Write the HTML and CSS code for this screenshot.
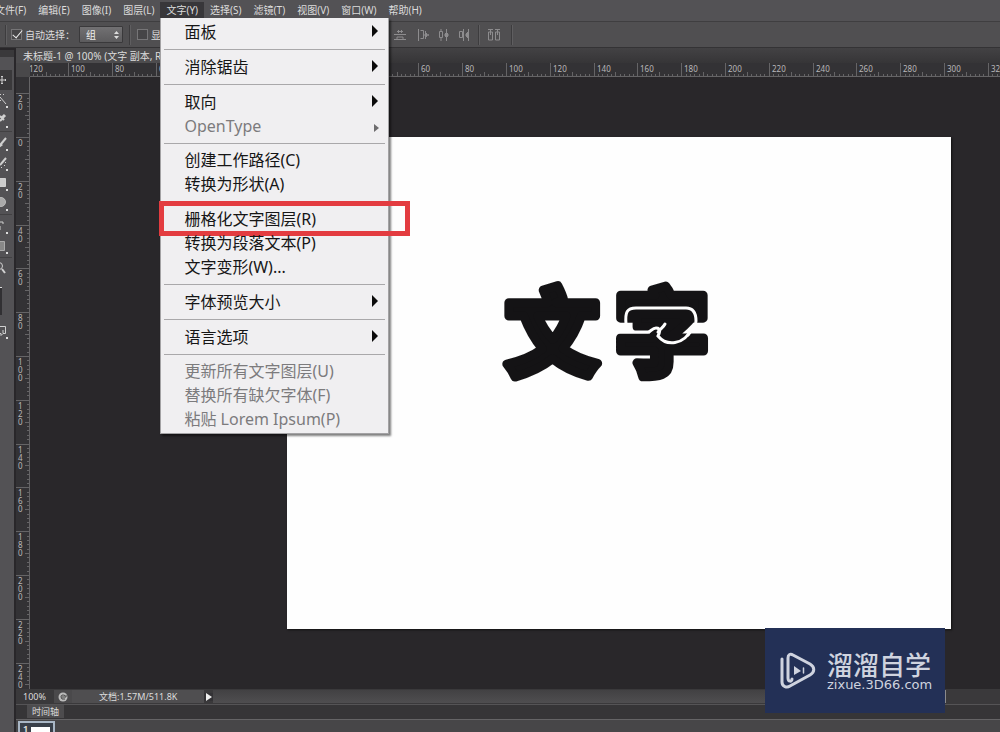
FILE: index.html
```html
<!DOCTYPE html>
<html lang="zh-CN">
<head>
<meta charset="utf-8">
<title>未标题-1 @ 100%</title>
<link rel="stylesheet" href="styles.css">
</head>
<body>
<div class="app">
  <nav class="menubar">
    <button class="menubar-item">文件(F)</button>
    <button class="menubar-item">编辑(E)</button>
    <button class="menubar-item">图像(I)</button>
    <button class="menubar-item">图层(L)</button>
    <div class="menubar-open">
      <button class="menubar-item is-open">文字(Y)</button>
      <div class="menu">
        <button class="menu-item has-sub">面板</button>
        <hr class="menu-sep">
        <button class="menu-item has-sub">消除锯齿</button>
        <hr class="menu-sep">
        <button class="menu-item has-sub">取向</button>
        <button class="menu-item has-sub" disabled>OpenType</button>
        <hr class="menu-sep is-tight">
        <button class="menu-item">创建工作路径(C)</button>
        <button class="menu-item">转换为形状(A)</button>
        <hr class="menu-sep">
        <button class="menu-item is-marked">栅格化文字图层(R)</button>
        <button class="menu-item">转换为段落文本(P)</button>
        <button class="menu-item">文字变形(W)...</button>
        <hr class="menu-sep">
        <button class="menu-item has-sub">字体预览大小</button>
        <hr class="menu-sep">
        <button class="menu-item has-sub">语言选项</button>
        <hr class="menu-sep is-tight">
        <button class="menu-item" disabled>更新所有文字图层(U)</button>
        <button class="menu-item" disabled>替换所有缺欠字体(F)</button>
        <button class="menu-item" disabled>粘贴 Lorem Ipsum(P)</button>
      </div>
    </div>
    <button class="menubar-item">选择(S)</button>
    <button class="menubar-item">滤镜(T)</button>
    <button class="menubar-item">视图(V)</button>
    <button class="menubar-item">窗口(W)</button>
    <button class="menubar-item">帮助(H)</button>
  </nav>

  <div class="options">
    <div class="options-main">
      <span class="divider"></span>
      <label class="check"><input type="checkbox" checked>自动选择：</label>
      <span class="select-wrap">
        <select class="select" aria-label="自动选择"><option>组</option><option>图层</option></select>
        <svg class="select-arrows" width="5" height="8" viewBox="0 0 5 8"><path d="M0 3 2.500 0 5 3ZM0 5h5L2.500 8Z" fill="#ddd"/></svg>
      </span>
      <span class="divider is-wide"></span>
      <label class="check"><input type="checkbox">显示变换控件</label>
    </div>
    <div class="align">
      <button class="align-btn is-first" aria-label="底对齐"><svg width="12" height="12" viewBox="0 0 12 12"><path d="M3 2.500h6M0 5.500h12M0 10.500h12" /><path d="M4.500 1v3M7.500 1v3M3 10V8h6v2" /></svg></button>
      <button class="align-btn" aria-label="左对齐"><svg width="12" height="12" viewBox="0 0 12 12"><path d="M.5 0v12M2.500 1.500h3v8h-3"/><path d="M7.500 2v8M8.500 4v4M10 5v2M6 6h5" /></svg></button>
      <button class="align-btn" aria-label="水平居中"><svg width="12" height="12" viewBox="0 0 12 12"><path d="M1.500 2.500h3v6h-3zM3 0v2M3 9v3M8.500 0v12M7.500 4v4M9.500 4v4M6 6h5"/></svg></button>
      <button class="align-btn" aria-label="右对齐"><svg width="12" height="12" viewBox="0 0 12 12"><path d="M1.500 2.500h3v6h-3zM5.500 0v12M10.500 0v12M9.500 3v6M8.500 4v4M7 6h4"/></svg></button>
      <span class="divider"></span>
      <button class="align-btn" aria-label="分布"><svg width="13" height="12" viewBox="0 0 13 12"><path d="M0 .5h5M7 .5h5M.5 3v8h4V3zM7.500 3v8h4V3zM2.500 1v5M9.500 1v5"/></svg></button>
      <span class="divider is-wide"></span>
    </div>
  </div>

  <div class="workspace">
    <aside class="tools">
      <button class="tool is-active" aria-label="移动"><svg width="12" height="18" viewBox="0 0 12 18"><path d="M-2 9h8M2 5v8M1 6l1-1 1 1M1 12l1 1 1-1M5 8l1 1-1 1"/></svg></button>
      <button class="tool corner" aria-label="魔棒"><svg width="12" height="18" viewBox="0 0 12 18"><path d="M0 6l6 7M0 3l1 1M3 4l1-1M-1 8l2 2"/></svg></button>
      <button class="tool corner" aria-label="吸管"><svg width="12" height="18" viewBox="0 0 12 18"><path d="M0 10l3-3M0 5l4 4" stroke-width="2"/><path d="M2 7l3-3" stroke-width="3"/></svg></button>
      <hr class="tool-sep">
      <button class="tool corner" aria-label="画笔"><svg width="12" height="18" viewBox="0 0 12 18"><path d="M6 4L1 10" stroke-width="2"/><path d="M-1 12l3-2" stroke-width="3"/></svg></button>
      <button class="tool corner" aria-label="历史画笔"><svg width="12" height="18" viewBox="0 0 12 18"><path d="M6 4L0 11" stroke-width="2"/><path d="M4 11l1 1M1 13l1 1M5 8l1 1"/></svg></button>
      <button class="tool corner" aria-label="渐变"><svg width="12" height="18" viewBox="0 0 12 18"><path d="M0 4.500h5.500v8H0" fill="#ccc"/></svg></button>
      <button class="tool corner" aria-label="模糊"><svg width="12" height="18" viewBox="0 0 12 18"><circle cx="1" cy="8" r="4.500" fill="#aaa" stroke="#bbb"/></svg></button>
      <hr class="tool-sep">
      <button class="tool corner" aria-label="钢笔"><svg width="12" height="18" viewBox="0 0 12 18"><path d="M-1 5h4v2M0 9v4"/></svg></button>
      <button class="tool corner" aria-label="矩形"><svg width="12" height="18" viewBox="0 0 12 18"><path d="M-2 4.500h6.500v9H-2" fill="#888" stroke="#aaa"/></svg></button>
      <hr class="tool-sep">
      <button class="tool" aria-label="缩放"><svg width="12" height="18" viewBox="0 0 12 18"><circle cx="-1" cy="6" r="3.500"/><path d="M2 9l3 4" stroke-width="2"/></svg></button>
      <span class="swatch"></span>
      <button class="tool corner" aria-label="快速蒙版"><svg width="12" height="18" viewBox="0 0 12 18"><path d="M-1 4.500h6.500v7H3l-2 2v-2h-2M3 11V8"/></svg></button>
    </aside>

    <main class="document">
      <div class="tabs"><button class="tab">未标题-1 @ 100% (文字 副本, RGB/8)</button></div>
      <div class="view">
        <div class="ruler-corner"></div>
        <svg class="ruler-x" id="ruler-x"></svg>
        <svg class="ruler-y" id="ruler-y"></svg>
        <div class="stage">
          <div class="canvas">
            <svg class="artwork" width="240" height="130" viewBox="0 0 240 130">
              <text x="62" y="98">文</text>
              <text x="172" y="98">字</text>
              <g class="swash">
                <path d="M124 62h34c3 0 4-4 8-4 6 0 3 6 2 8 8 10 26 10 34-8"/>
                <path d="M136 54c-1-12 1-16 10-16h50c7 0 10 5 10 13 0 5-4 9-8 14"/>
                <path d="M175 54c-2 4-5 5-7 8"/>
              </g>
            </svg>
          </div>
        </div>
      </div>
      <footer class="status">
        <span class="zoom">100%</span>
        <button class="status-btn" aria-label="预览"><svg width="10" height="10" viewBox="0 0 10 10"><circle cx="5" cy="5" r="4.500" fill="#bbb"/><path d="M7 3.500Q3 2 3 5t4 2M4 5h4V3" fill="none" stroke="#444"/></svg></button>
        <span class="doc-size">文档:1.57M/511.8K</span>
        <button class="status-arrow" aria-label="更多"><svg width="6" height="8" viewBox="0 0 6 8"><path d="M0 0l6 4-6 4Z" fill="#eee"/></svg></button>
        <span class="scroll"></span>
      </footer>
      <div class="timeline-tabs"><button class="timeline-tab">时间轴</button></div>
      <div class="timeline"><div class="frame"><span class="frame-no">1</span><span class="frame-img"></span></div></div>
    </main>
  </div>

  <div class="brand">
    <svg width="36" height="38" viewBox="0 0 36 38" fill="none" stroke="#cfd3df" stroke-width="3" stroke-linecap="round">
      <path d="M2 7v23c0 5 5 6 8 4l20-11c5-3 5-8 0-11L13 3C10 1 8 3 8 6v20c0 4 4 4 4 1"/>
      <path d="M14 14l7 5-7 4Z" fill="#cfd3df" stroke="none"/><path d="M23.500 16v5" stroke-width="1.500"/>
    </svg>
    <div class="brand-text"><span class="brand-name">溜溜自学</span><span class="brand-url">zixue.3D66.com</span></div>
  </div>
</div>
<script src="rulers.js"></script>
</body>
</html>
```
FILE: styles.css
```css
*, *::before, *::after { box-sizing: border-box; }

body {
  margin: 0;
  font-family: "Noto Sans", "Noto Sans CJK SC", sans-serif;
  font-size: 10px;
  line-height: 14px;
  color: #dcdcdc;
  background: #29272a;
}

button {
  margin: 0;
  padding: 0;
  border: 0;
  background: none;
  font: inherit;
  color: inherit;
}

.app {
  position: relative;
  display: flex;
  flex-direction: column;
  height: 100vh;
  overflow: hidden;
}

/* Menu bar */
.menubar {
  display: flex;
  height: 21px;
  padding: 2px 0;
  margin-left: -11px;
  background: #535255;
}
.menubar-item { height: 16px; padding: 0 6px; white-space: nowrap; }
.menubar-item.is-open { background: #38373a; }
.menubar-open { position: relative; }

.menu {
  position: absolute;
  z-index: 2;
  top: 16px;
  left: 0;
  width: 229px;
  padding: 2px 3px;
  background: #f0eff1;
  border: 1px solid #a3a2a4;
  border-top: 0;
  box-shadow: 2px 2px 2px rgba(0, 0, 0, .5);
  color: #161616;
}
.menu-item {
  position: relative;
  display: block;
  width: 100%;
  height: 24px;
  padding-left: 20px;
  font-size: 16px;
  line-height: 24px;
  text-align: left;
  white-space: nowrap;
}
.menu-item:disabled { color: #7c7b7d; }
.has-sub::after {
  content: "";
  position: absolute;
  top: 5px;
  right: 7px;
  border: 6px solid transparent;
  border-left-color: #0b0b0b;
  border-right-width: 0;
}
.has-sub:disabled::after {
  top: 10px;
  right: 6px;
  border-width: 4px 0 4px 5px;
  border-left-color: #6d6c6e;
}
.menu-sep {
  height: 11px;
  margin: 0;
  border: 0;
  background: linear-gradient(#a9a8aa, #a9a8aa) 0 5px / 100% 1px no-repeat;
}
.menu-sep.is-tight { height: 10px; }
.is-marked::before {
  content: "";
  position: absolute;
  top: -6px;
  left: -5px;
  width: 251px;
  height: 35px;
  border: 5px solid #e33c40;
}

/* Options bar */
.options {
  display: flex;
  align-items: center;
  height: 27px;
  border-top: 1px solid #3f3e40;
  border-bottom: 1px solid #343335;
  background: #504f51;
}
.options-main {
  display: flex;
  align-items: center;
  flex: 0 0 394px;
  gap: 4px;
  padding-left: 5px;
}
.divider {
  width: 2px;
  height: 20px;
  border-left: 1px solid #3d3c3e;
  border-right: 1px solid #5f5e60;
}
.divider.is-wide { margin: 0 2px; }
.check { display: flex; align-items: center; gap: 3px; white-space: nowrap; }
.check input {
  position: relative;
  appearance: none;
  width: 11px;
  height: 11px;
  margin: 0;
  border: 1px solid #767577;
  background: #464547;
}
.check input:checked::after {
  content: "";
  position: absolute;
  left: 3px;
  top: -2px;
  width: 5px;
  height: 10px;
  border: solid #eee;
  border-width: 0 1px 1px 0;
  transform: rotate(40deg);
}
.select-wrap { position: relative; }
.select {
  appearance: none;
  display: block;
  width: 44px;
  height: 17px;
  padding: 0 6px;
  border: 1px solid #3a393b;
  border-radius: 1px;
  background: linear-gradient(#727173, #5c5b5d);
  color: #eee;
  font: inherit;
}
.select-arrows { position: absolute; right: 4px; top: 5px; }
.align { display: flex; align-items: center; gap: 8px; }
.align-btn { display: flex; }
.align-btn.is-first { margin-right: 4px; }
.align svg { fill: none; stroke: #8d8c8e; }

/* Workspace */
.workspace { display: flex; flex: 1; min-height: 0; }
.tools {
  display: flex;
  flex-direction: column;
  flex: 0 0 14px;
  margin: 2px 2px 0 0;
  padding-top: 13px;
  border-top: 7px solid #3a393b;
  background: #535255;
}
.tool {
  position: relative;
  display: flex;
  height: 20px;
  align-items: center;
  flex: none;
}
.tool.is-active { background: #3a393b; width: 12px; }
.tool svg { fill: none; stroke: #d0d0d0; }
.corner::after {
  content: "";
  position: absolute;
  right: 6px;
  bottom: 2px;
  width: 2px;
  height: 2px;
  background: #ddd;
}
.corner { width: 14px; }
.tool-sep { width: 12px; height: 1px; margin: 1px 0; border: 0; background: #424143; }
.swatch {
  width: 2px;
  height: 28px;
  margin: 8px 0 6px;
  border-top: 1px solid #ddd;
  background: #313033;
}

.document { display: flex; flex-direction: column; flex: 1; min-width: 0; }
.tabs {
  display: flex;
  height: 15px;
  background: linear-gradient(#434244, #363537);
}
.tab { padding: 0 7px; height: 15px; background: #4d4c4e; white-space: nowrap; }

.view {
  display: grid;
  grid-template: 14px 1fr / 14px 1fr;
  flex: 1;
  min-height: 0;
}
.ruler-corner { background: #49484a; }
.ruler-x, .ruler-y {
  display: block;
  width: 100%;
  height: 100%;
  overflow: hidden;
  background: #333235;
  stroke: #656466;
}
.ruler-x text, .ruler-y text {
  fill: #b8b7b9;
  stroke: none;
  font-family: "Noto Sans", sans-serif;
  font-size: 8px;
}
.stage {
  display: flex;
  min-width: 0;
  padding: 60px 49px 60px 257px;
  background: #29272a;
}
.canvas {
  flex: 1;
  padding: 133px 0 0 203px;
  background: #fefefe;
  box-shadow: 1px 1px 2px #111;
}
.artwork { display: block; }
.artwork text {
  font-family: "Noto Sans CJK SC", sans-serif;
  font-size: 94px;
  font-weight: 900;
  text-anchor: middle;
  fill: #141315;
  stroke: #141315;
  stroke-width: 9px;
  stroke-linejoin: round;
}
.swash { fill: none; stroke: #fefefe; stroke-width: 3px; stroke-linecap: round; }

/* Status bar and timeline */
.status {
  display: flex;
  align-items: center;
  height: 15px;
  background: #3a393b;
}
.zoom { flex: 0 0 38px; padding-left: 7px; font-size: 9px; }
.status-btn {
  display: flex;
  align-items: center;
  justify-content: center;
  width: 18px;
  height: 13px;
  background: #4a494b;
}
.doc-size {
  flex: 0 0 132px;
  height: 13px;
  padding-left: 27px;
  font-size: 9px;
  line-height: 13px;
  background: #4f4e50;
  white-space: nowrap;
}
.status-arrow { display: flex; justify-content: center; width: 9px; background: #333235; }
.scroll {
  flex: 1;
  height: 13px;
  margin-right: 54px;
  border-right: 1px solid #8b8a8c;
  background: linear-gradient(#424143, #4f4e50);
}
.timeline-tabs {
  height: 15px;
  padding-left: 11px;
  border-top: 1px solid #555456;
  background: #363537;
}
.timeline-tab { display: block; height: 13px; padding: 0 5px; background: #4d4c4e; line-height: 13px; font-size: 9px; }
.timeline {
  height: 13px;
  padding: 1px 2px 0;
  border-top: 1px solid #656466;
  background: #474648;
  overflow: hidden;
}
.frame {
  display: flex;
  gap: 3px;
  width: 37px;
  height: 30px;
  padding: 1px 3px;
  border: 2px solid #a9b7c6;
  background: #39404a;
  font-size: 9px;
  line-height: 10px;
  font-weight: 700;
}
.frame-no { flex: 0 0 5px; }
.frame-img { flex: 1; height: 20px; margin-top: 3px; background: #fff; }

/* Brand badge */
.brand {
  position: absolute;
  right: 55px;
  bottom: 19px;
  display: flex;
  align-items: center;
  gap: 11px;
  width: 180px;
  height: 85px;
  padding-left: 15px;
  background: #233056;
  color: #cfd3df;
}
.brand-text { display: flex; flex-direction: column; }
.brand-name {
  font-family: "Noto Sans CJK SC", sans-serif;
  font-size: 26px;
  font-weight: 500;
  line-height: 28px;
}
.brand-url { font-family: "DejaVu Sans", sans-serif; font-size: 13px; line-height: 13px; }
```
FILE: rulers.js
```js
const NS = "http://www.w3.org/2000/svg";
const STEP = 43.8; // pixels for each 20 ruler units

function add(parent, name, attrs, text) {
  const el = document.createElementNS(NS, name);
  for (const key in attrs) el.setAttribute(key, attrs[key]);
  if (text !== undefined) el.textContent = text;
  parent.appendChild(el);
}

function drawRuler(id, origin, from, to, vertical) {
  const svg = document.getElementById(id);
  const line = (pos, start) => {
    const p = Math.round(pos) + 0.5;
    add(svg, "line", vertical
      ? { x1: start, x2: 14, y1: p, y2: p }
      : { x1: p, x2: p, y1: start, y2: 14 });
  };
  for (let i = from; i <= to; i++) {
    const pos = origin + i * STEP;
    line(pos, 0);
    for (let k = 1; k < 10; k++) line(pos + k * STEP / 10, k === 5 ? 9 : 11);
    const label = String(Math.abs(i) * 20);
    if (vertical) {
      [...label].forEach((digit, n) =>
        add(svg, "text", { x: 2, y: Math.round(pos) + 9 + n * 8 }, digit));
    } else {
      add(svg, "text", { x: Math.max(Math.round(pos) + 3, -1), y: 9 }, label);
    }
  }
  add(svg, "line", vertical
    ? { x1: 13.5, x2: 13.5, y1: 0, y2: "100%" }
    : { x1: 0, x2: "100%", y1: 13.5, y2: 13.5 });
}

drawRuler("ruler-x", 257, -6, 16, false);
drawRuler("ruler-y", 60, -1, 12, true);
```
